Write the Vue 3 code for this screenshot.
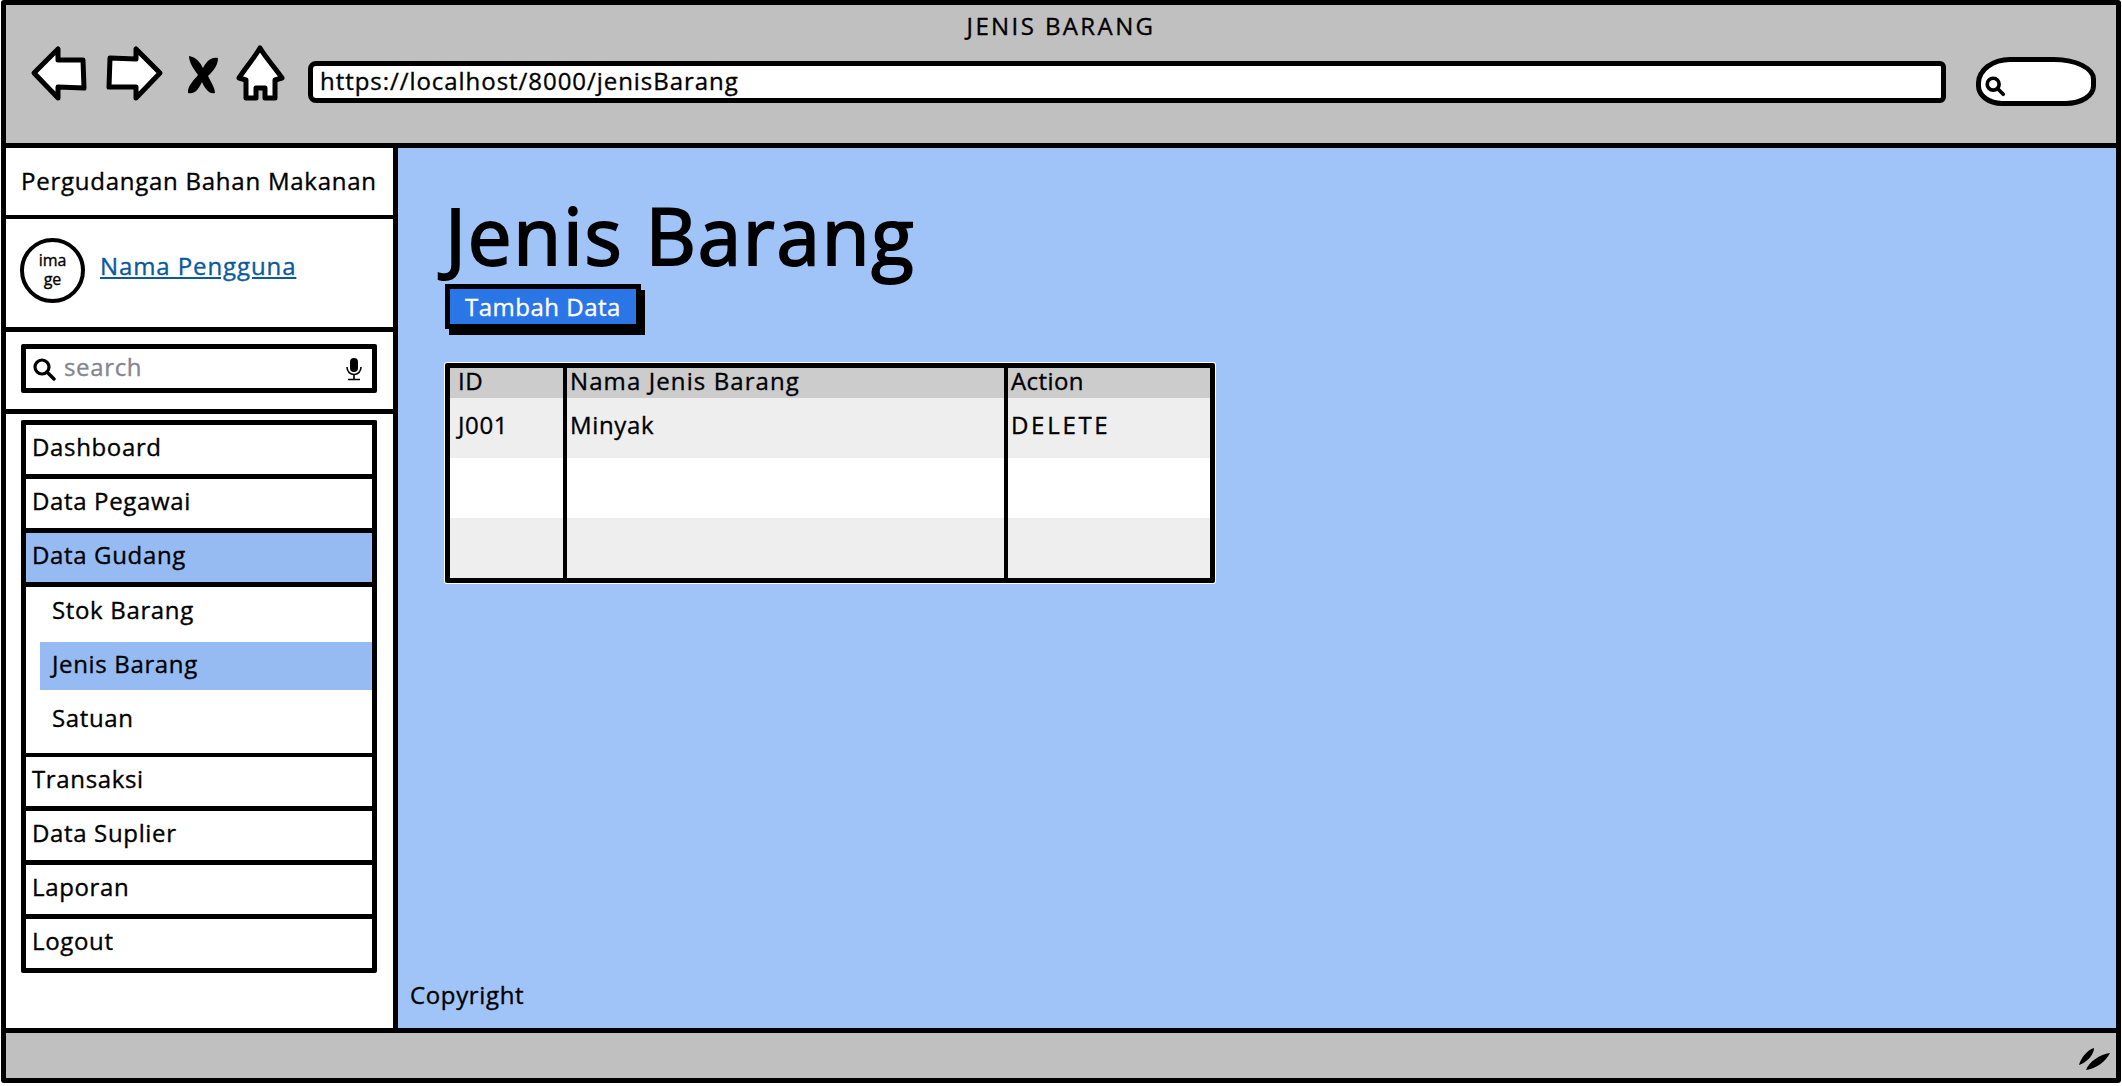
<template>
  <div class="window">
    <!-- browser bar -->
    <header class="topbar">
      <div class="page-title">JENIS BARANG</div>
      <div class="nav-row">
        <svg class="ic-back" viewBox="0 0 58 56">
          <path d="M4 28 L28 4 L28 15 L53 15 L54 43 L28 42 L28 53 Z" fill="#fff" stroke="#000" stroke-width="5" stroke-linejoin="round" />
        </svg>
        <svg class="ic-forward" viewBox="0 0 60 56">
          <path d="M56 28 L32 4 L32 14 L6 13 L5 42 L32 42 L32 53 Z" fill="#fff" stroke="#000" stroke-width="5" stroke-linejoin="round" />
        </svg>
        <svg class="ic-close" viewBox="0 0 32 40">
          <path d="M2 1 C10 2 14 9 16 13 C18 8 24 1 31 3 C31 12 24 18 21 21 C24 27 28 33 28 38 C22 40 17 32 15 27 C12 33 8 40 1 38 C0 31 8 24 11 20 C7 14 2 8 2 1 Z" fill="#000" />
        </svg>
        <svg class="ic-home" viewBox="0 0 50 56">
          <path d="M25 3 C31 13 41 24 47 33 L40 35 L40 53 L30 53 L30 43 L21 43 L21 53 L11 53 L11 35 L4 33 C10 24 19 13 25 3 Z" fill="#fff" stroke="#000" stroke-width="5" stroke-linejoin="round" />
        </svg>
        <div class="url-box">https://localhost/8000/jenisBarang</div>
        <div class="search-pill">
          <svg viewBox="0 0 24 24" width="22" height="22">
            <circle cx="10" cy="10" r="6.5" fill="none" stroke="#000" stroke-width="4" />
            <path d="M15 15 L21 21" stroke="#000" stroke-width="4" stroke-linecap="round" />
          </svg>
        </div>
      </div>
    </header>

    <div class="body">
      <aside class="sidebar">
        <div class="brand">Pergudangan Bahan Makanan</div>
        <div class="profile">
          <div class="avatar">ima<br />ge</div>
          <a class="user-link" href="#">Nama Pengguna</a>
        </div>
        <div class="search-wrap">
          <div class="search-box">
            <svg viewBox="0 0 24 24" width="24" height="24">
              <circle cx="10" cy="10" r="7" fill="none" stroke="#000" stroke-width="3.2" />
              <path d="M15 15 L22 22" stroke="#000" stroke-width="3.4" stroke-linecap="round" />
            </svg>
            <span class="search-text">search</span>
            <svg class="mic" viewBox="0 0 18 24" width="18" height="24">
              <rect x="5" y="1" width="8" height="14" rx="4" fill="#000" />
              <path d="M2 10 C2 20 16 20 16 10" fill="none" stroke="#000" stroke-width="1.6" />
              <path d="M9 18 L9 22 M3 22.5 L15 22.5" stroke="#000" stroke-width="1.6" />
            </svg>
          </div>
        </div>
        <nav class="menu">
          <template v-for="item in menu" :key="item.label">
            <div class="menu-item" :class="{ active: item.active }">{{ item.label }}</div>
            <div v-if="item.children" class="submenu">
              <div
                v-for="sub in item.children"
                :key="sub.label"
                class="sub-item"
                :class="{ active: sub.active }"
              >{{ sub.label }}</div>
            </div>
          </template>
        </nav>
      </aside>

      <main class="content">
        <h1 class="title">Jenis Barang</h1>
        <button class="add-btn">Tambah Data</button>
        <table class="data-table">
          <thead>
            <tr>
              <th class="col-id">ID</th>
              <th class="col-name">Nama Jenis Barang</th>
              <th class="col-action">Action</th>
            </tr>
          </thead>
          <tbody>
            <tr v-for="(row, i) in rows" :key="i">
              <td class="col-id">{{ row.id }}</td>
              <td class="col-name">{{ row.name }}</td>
              <td class="col-action upper">{{ row.action }}</td>
            </tr>
          </tbody>
        </table>
        <div class="copyright">Copyright</div>
      </main>
    </div>

    <footer class="statusbar">
      <svg viewBox="0 0 34 24" width="34" height="24">
        <path d="M1 19 C3 12 9 4 16 2 C16 9 8 17 1 19 Z M8 24 C11 16 22 8 32 7 C28 15 18 23 8 24 Z" fill="#000" />
      </svg>
    </footer>
  </div>
</template>

<script setup>
const menu = [
  { label: 'Dashboard' },
  { label: 'Data Pegawai' },
  {
    label: 'Data Gudang',
    active: true,
    children: [
      { label: 'Stok Barang' },
      { label: 'Jenis Barang', active: true },
      { label: 'Satuan' },
    ],
  },
  { label: 'Transaksi' },
  { label: 'Data Suplier' },
  { label: 'Laporan' },
  { label: 'Logout' },
];

const rows = [
  { id: 'J001', name: 'Minyak', action: 'DELETE' },
  { id: '', name: '', action: '' },
  { id: '', name: '', action: '' },
];
</script>

<style>
html,
body {
  margin: 0;
  background: #fff;
  overflow: hidden;
}
</style>

<style scoped>
.window {
  box-sizing: border-box;
  width: 2120px;
  height: 1083px;
  margin: 0 1px;
  border: 5px solid #000;
  border-radius: 3px;
  display: flex;
  flex-direction: column;
  font-family: "Open Sans", "Noto Sans", sans-serif;
  font-size: 24px;
  letter-spacing: 0.65px;
  -webkit-text-stroke: 0.35px currentColor;
  color: #000;
  background: #fff;
}

.topbar {
  box-sizing: border-box;
  height: 143px;
  flex: none;
  background: #c0c0c0;
  border-bottom: 5px solid #000;
}

.page-title {
  text-align: center;
  line-height: 30px;
  padding-top: 6px;
  letter-spacing: 2.4px;
}

.nav-row {
  display: flex;
  align-items: center;
  height: 60px;
  margin-top: 9px;
  padding: 0 20px 0 24px;
}

.nav-row svg {
  flex: none;
}

.ic-back {
  width: 58px;
  height: 56px;
  margin-bottom: 14px;
}

.ic-forward {
  width: 60px;
  height: 56px;
  margin: 0 0 14px 16px;
}

.ic-close {
  width: 32px;
  height: 40px;
  margin: 0 0 10px 23px;
}

.ic-home {
  width: 50px;
  height: 56px;
  margin: 0 0 14px 16px;
}

.url-box {
  flex: 1;
  box-sizing: border-box;
  height: 42px;
  margin: 3px 0 0 23px;
  padding-left: 7px;
  line-height: 30px;
  letter-spacing: 0.95px;
  background: #fff;
  border: 5px solid #000;
  border-radius: 8px 6px 6px 8px;
}

.search-pill {
  box-sizing: border-box;
  width: 120px;
  height: 49px;
  margin: 3px 0 0 30px;
  padding: 9px 0 0 3px;
  background: #fff;
  border: 5px solid #000;
  border-radius: 34px 42px 30px 26px / 26px 22px 20px 20px;
}

.body {
  flex: 1;
  display: flex;
  min-height: 0;
}

.sidebar {
  box-sizing: border-box;
  width: 392px;
  flex: none;
  background: #fff;
  border-right: 5px solid #000;
}

.brand {
  box-sizing: border-box;
  height: 71px;
  padding: 18px 0 0 15px;
  line-height: 30px;
  letter-spacing: 0.75px;
  border-bottom: 4px solid #000;
  white-space: nowrap;
}

.profile {
  box-sizing: border-box;
  height: 113px;
  display: flex;
  padding: 19px 0 0 14px;
  border-bottom: 5px solid #000;
}

.avatar {
  box-sizing: border-box;
  width: 65px;
  height: 65px;
  border: 4px solid #000;
  border-radius: 50%;
  font-size: 16px;
  letter-spacing: 0;
  line-height: 19px;
  text-align: center;
  padding-top: 9px;
}

.user-link {
  margin: 12px 0 0 15px;
  height: 34px;
  line-height: 32px;
  letter-spacing: 0.9px;
  color: #0b5a9c;
}

.search-wrap {
  box-sizing: border-box;
  height: 82px;
  padding: 12px 16px 0 15px;
  border-bottom: 5px solid #000;
}

.search-box {
  box-sizing: border-box;
  height: 49px;
  display: flex;
  align-items: center;
  padding: 0 9px 0 6px;
  border: 5px solid #000;
  border-radius: 2px;
}

.search-text {
  flex: 1;
  margin-left: 8px;
  line-height: 30px;
  padding-bottom: 4px;
  color: #85858f;
}

.menu {
  margin: 6px 16px 0 15px;
  border: 5px solid #000;
  border-bottom-width: 0;
  border-radius: 2px;
}

.menu-item {
  box-sizing: border-box;
  height: 54px;
  padding-left: 6px;
  line-height: 44px;
  border-bottom: 5px solid #000;
}

.menu-item.active,
.sub-item.active {
  background: #95bbf2;
}

.submenu {
  box-sizing: border-box;
  height: 170px;
  display: flex;
  flex-direction: column;
  gap: 6px;
  padding: 1px 0 0 14px;
  border-bottom: 4px solid #000;
}

.sub-item {
  height: 48px;
  padding-left: 12px;
  line-height: 43px;
}

.content {
  flex: 1;
  min-width: 0;
  display: flex;
  flex-direction: column;
  align-items: flex-start;
  background: #a0c4f8;
  padding-left: 47px;
}

.title {
  margin: 40px 0 0 0;
  font-size: 78px;
  font-weight: 400;
  letter-spacing: 1.8px;
  line-height: 94px;
  -webkit-text-stroke: 2px #000;
}

.add-btn {
  box-sizing: border-box;
  width: 196px;
  height: 45px;
  margin-top: 2px;
  padding: 0;
  background: #2b76e6;
  color: #fff;
  border: 5px solid #000;
  box-shadow: 4px 6px 0 #000;
  font-family: inherit;
  font-size: 24px;
  letter-spacing: 0.5px;
  -webkit-text-stroke: 0.35px #fff;
  line-height: 30px;
}

.data-table {
  box-sizing: border-box;
  width: 770px;
  height: 220px;
  margin-top: 34px;
  border-collapse: separate;
  border-spacing: 0;
  border: 5px solid #000;
  border-radius: 2px;
  table-layout: fixed;
  background: #fff;
  box-shadow: 0 0 0 1px #fff;
}

.data-table th,
.data-table td {
  box-sizing: border-box;
  padding: 0 0 0 3px;
  font-weight: 400;
  text-align: left;
}

.data-table th {
  height: 30px;
  padding-bottom: 4px;
  line-height: 26px;
  background: #cccccc;
}

.data-table th.col-name {
  letter-spacing: 1.1px;
}

.data-table th.col-action {
  letter-spacing: 0.4px;
}

.data-table td {
  height: 60px;
  padding-bottom: 7px;
}

.data-table tbody tr:nth-child(odd) td {
  background: #eeeeee;
}

.data-table .col-id {
  width: 113px;
  padding-left: 8px;
}

.data-table .col-name {
  width: 441px;
}

.col-name,
.col-action {
  border-left: 4px solid #000;
}

.upper {
  letter-spacing: 2.7px;
}

.copyright {
  margin: auto 0 0 -35px;
  padding-bottom: 18px;
  line-height: 30px;
}

.statusbar {
  box-sizing: border-box;
  height: 50px;
  flex: none;
  display: flex;
  justify-content: flex-end;
  align-items: center;
  padding: 4px 4px 0 0;
  background: #c0c0c0;
  border-top: 5px solid #000;
}
</style>
